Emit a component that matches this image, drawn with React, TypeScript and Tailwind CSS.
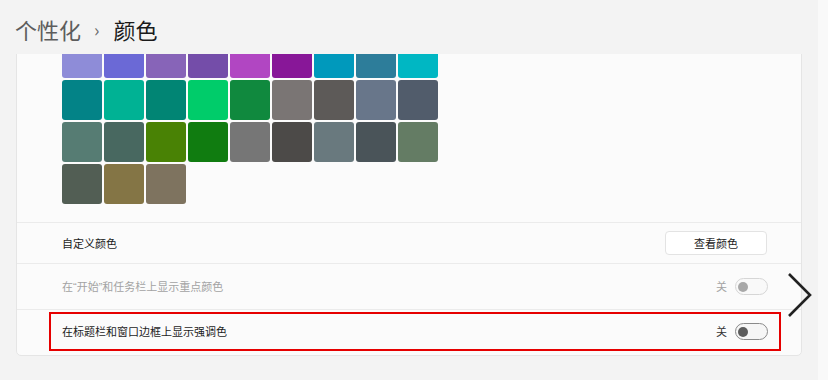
import React from "react";

const swatches = [
  "#8e8cd8", "#6b69d6", "#8764b8", "#744da9", "#b146c2", "#881798", "#0099bc", "#2d7d9a", "#00b7c3",
  "#038387", "#00b294", "#018574", "#00cc6a", "#10893e", "#7a7574", "#5d5a58", "#68768a", "#515c6b",
  "#567c73", "#486860", "#498205", "#107c10", "#767676", "#4c4a48", "#69797e", "#4a5459", "#647c64",
  "#525e54", "#847545", "#7e735f",
];

const Toggle = ({ disabled }: { disabled?: boolean }) => (
  <div
    className={
      disabled
        ? "w-[33px] h-[17px] rounded-full border border-[#d6d6d6] bg-[#f9f9f9] flex items-center pl-[2px]"
        : "w-[33px] h-[17px] rounded-full border border-[#8a8a8a] bg-[#f6f6f6] flex items-center pl-[2px]"
    }
  >
    <div
      className={
        disabled
          ? "w-[10px] h-[10px] rounded-full bg-[#a8a8a8]"
          : "w-[10px] h-[10px] rounded-full bg-[#5c5c5c]"
      }
    />
  </div>
);

const Q = ({ c }: { c: string }) => (
  <span style={{ fontFamily: '"Liberation Sans", sans-serif' }}>{c}</span>
);

export default function App() {
  return (
    <div
      className="relative w-[828px] h-[380px] overflow-hidden bg-[#f3f3f3] text-[#1b1b1b]"
      style={{ fontFamily: '"Noto Sans CJK SC", "Noto Sans", sans-serif' }}
    >
      {/* breadcrumb */}
      <div className="h-[54px] pl-[15px] pt-[3px] flex items-center text-[22px] leading-none">
        <span className="text-[#5d5d5d]">个性化</span>
        <span className="text-[#6a6a6a] text-[18px] ml-[13px] mr-[14px]">›</span>
        <span className="text-[#1a1a1a]">颜色</span>
      </div>

      {/* scroll area */}
      <div className="ml-[16px] w-[786px] h-[326px] overflow-hidden">
        <div className="-mt-[17px] bg-[#fbfbfb] border border-[#e5e5e5] rounded-[5px]">
          <div className="pl-[45px] pb-[18px]">
            <div className="grid grid-cols-[repeat(9,40px)] gap-[2px]">
              {swatches.map((c, i) => (
                <div key={i} className="h-[40px] rounded-[3px]" style={{ backgroundColor: c }} />
              ))}
            </div>
          </div>

          <div className="h-[41px] border-t border-[#ebebeb] flex items-center justify-between pl-[45px] pr-[34px] text-[11px]">
            <span>自定义颜色</span>
            <button className="w-[102px] h-[24px] bg-white border border-[#e3e3e3] rounded-[4px] text-[11px] text-[#1b1b1b]">
              查看颜色
            </button>
          </div>

          <div className="h-[46px] border-t border-[#ebebeb] flex items-center justify-between pl-[45px] pr-[33px] text-[11px] text-[#a3a3a3]">
            <span>
              在<Q c="“" />开始<Q c="”" />和任务栏上显示重点颜色
            </span>
            <div className="flex items-center gap-[8px]">
              <span>关</span>
              <Toggle disabled />
            </div>
          </div>

          <div className="h-[46px] border-t border-[#ebebeb] pt-[2px] pl-[32px] pr-[20px]">
            <div className="h-[39px] border-2 border-[#e60000] flex items-center justify-between pl-[11px] pr-[11px] text-[11px]">
              <span>在标题栏和窗口边框上显示强调色</span>
              <div className="flex items-center gap-[8px]">
                <span className="text-[#333]">关</span>
                <Toggle />
              </div>
            </div>
          </div>
        </div>
      </div>

      {/* right edge strip */}
      <div className="absolute top-0 right-0 w-[10px] h-full bg-[#f9f9f9]" />

      {/* next arrow */}
      <svg
        className="absolute left-[786px] top-[272px]"
        width="28"
        height="46"
        viewBox="0 0 28 46"
        fill="none"
      >
        <path d="M3 2 L24 23 L3 44" stroke="#222" strokeWidth="2.6" />
      </svg>
    </div>
  );
}
